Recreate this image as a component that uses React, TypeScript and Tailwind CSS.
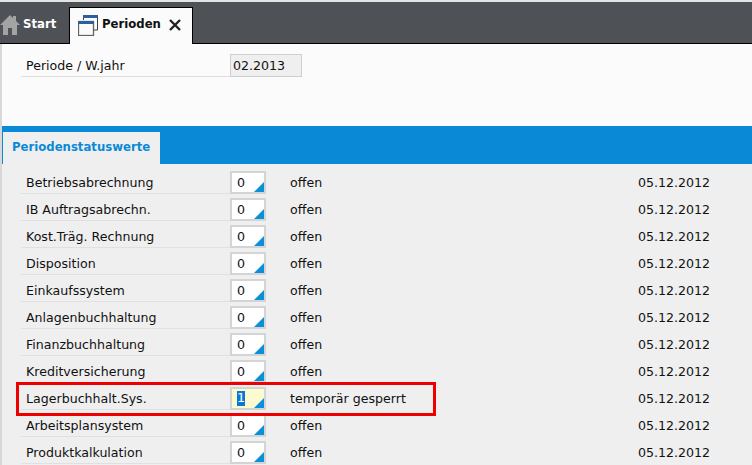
const rows: [string, string, string][] = [
  ["Betriebsabrechnung", "0", "offen"],
  ["IB Auftragsabrechn.", "0", "offen"],
  ["Kost.Träg. Rechnung", "0", "offen"],
  ["Disposition", "0", "offen"],
  ["Einkaufssystem", "0", "offen"],
  ["Anlagenbuchhaltung", "0", "offen"],
  ["Finanzbuchhaltung", "0", "offen"],
  ["Kreditversicherung", "0", "offen"],
  ["Lagerbuchhalt.Sys.", "1", "temporär gesperrt"],
  ["Arbeitsplansystem", "0", "offen"],
  ["Produktkalkulation", "0", "offen"],
];

function Row({ label, value, status }: { label: string; value: string; status: string }) {
  const active = value === "1";
  return (
    <div className="flex h-[27px] shrink-0 items-end">
      <div className="ml-[21px] flex h-[23px] w-[209px] shrink-0 items-center border-b border-[#e0e0e0] pl-[5px] pt-[2px]">
        {label}
      </div>
      <div
        className={`relative flex h-[23px] w-[36px] shrink-0 items-center border-2 border-[#d4d4d4] pl-[5px] ${active ? "bg-[#fbfbcf]" : "bg-white"}`}
      >
        {active ? (
          <span className="flex h-[15px] w-[8px] items-center justify-center bg-[#0a78d7] text-white">{value}</span>
        ) : (
          <span className="pt-[2px]">{value}</span>
        )}
        <span className="absolute bottom-0 right-0 h-0 w-0 border-b-[10px] border-l-[10px] border-b-[#0a8fd8] border-l-transparent" />
      </div>
      <div className="flex h-[23px] w-[372px] shrink-0 items-center pl-[24px] pt-[2px]">{status}</div>
      <div className="flex h-[23px] items-center pt-[2px]">05.12.2012</div>
    </div>
  );
}

export default function App() {
  return (
    <div className="relative flex h-[465px] w-[752px] flex-col overflow-hidden bg-[#efefef] font-['DejaVu_Sans',sans-serif] text-[12.6px] text-[#111]">
      <div className="h-[2px] shrink-0 bg-[#e4e4e4]" />
      <div className="flex h-[42px] shrink-0 items-end border-b border-black bg-[#4e5155] text-[11.7px]">
        <div className="flex h-[36px] w-[69px] shrink-0 items-center font-bold text-white">
          <svg width="20" height="20" viewBox="0 0 20 20" className="shrink-0">
            <path d="M0 10 L10 0 L13 3 L13 1 L16 1 L16 6 L20 10 L17 10 L17 20 L12 20 L12 13 L8 13 L8 20 L3 20 L3 10 Z" fill="#a3a3a3" />
          </svg>
          <span className="ml-[3px]">Start</span>
        </div>
        <div className="mb-[-1px] flex h-[37px] w-[124px] shrink-0 items-center border-x border-t border-black bg-[#fbfbfb] pb-[2px] pl-[8px] font-bold text-[#111]">
          <svg width="21" height="21" viewBox="0 0 21 21" className="shrink-0">
            <path d="M5.5 5V1H19.5V15H16" fill="none" stroke="#3b3f45" />
            <rect x="5" y="0" width="15" height="3" fill="#2c5f9e" />
            <rect x="0.5" y="6.5" width="15" height="14" fill="#fbfbfb" stroke="#5f6368" strokeWidth="1.3" />
            <rect x="0" y="6" width="16" height="3" fill="#2c5f9e" />
          </svg>
          <span className="ml-[3px]">Perioden</span>
          <svg width="12" height="12" viewBox="0 0 12 12" className="ml-[8px] shrink-0">
            <path d="M1 1 L11 11 M11 1 L1 11" stroke="#222" strokeWidth="2.4" />
          </svg>
        </div>
      </div>
      <div className="flex min-h-0 flex-1 flex-col border-l-2 border-[#d8d8d8]">
        <div className="h-[82px] shrink-0 bg-[#fbfbfb] pt-[10px]">
          <div className="flex h-[23px] items-center">
            <div className="ml-[19px] flex h-[23px] w-[209px] shrink-0 items-center border-b border-[#dedede] pl-[5px] pt-[2px]">
              Periode / W.jahr
            </div>
            <div className="flex h-[23px] w-[72px] items-center border border-[#cfcfcf] bg-[#efefef] pl-[2px] pt-[2px]">02.2013</div>
          </div>
        </div>
        <div className="flex h-[38px] shrink-0 items-end bg-[#0a8ad6] pl-[1px]">
          <div className="flex h-[32px] w-[157px] items-center bg-[#efefef] pl-[9px] text-[11.7px] font-bold text-[#0a8ad6]">
            Periodenstatuswerte
          </div>
        </div>
        <div className="ml-[-2px] flex flex-col pt-[3px]">
          {rows.map((r) => (
            <Row key={r[0]} label={r[0]} value={r[1]} status={r[2]} />
          ))}
        </div>
      </div>
      <div className="absolute left-[16px] top-[382px] h-[34px] w-[420px] border-[3px] border-[#ee0000]" />
    </div>
  );
}
